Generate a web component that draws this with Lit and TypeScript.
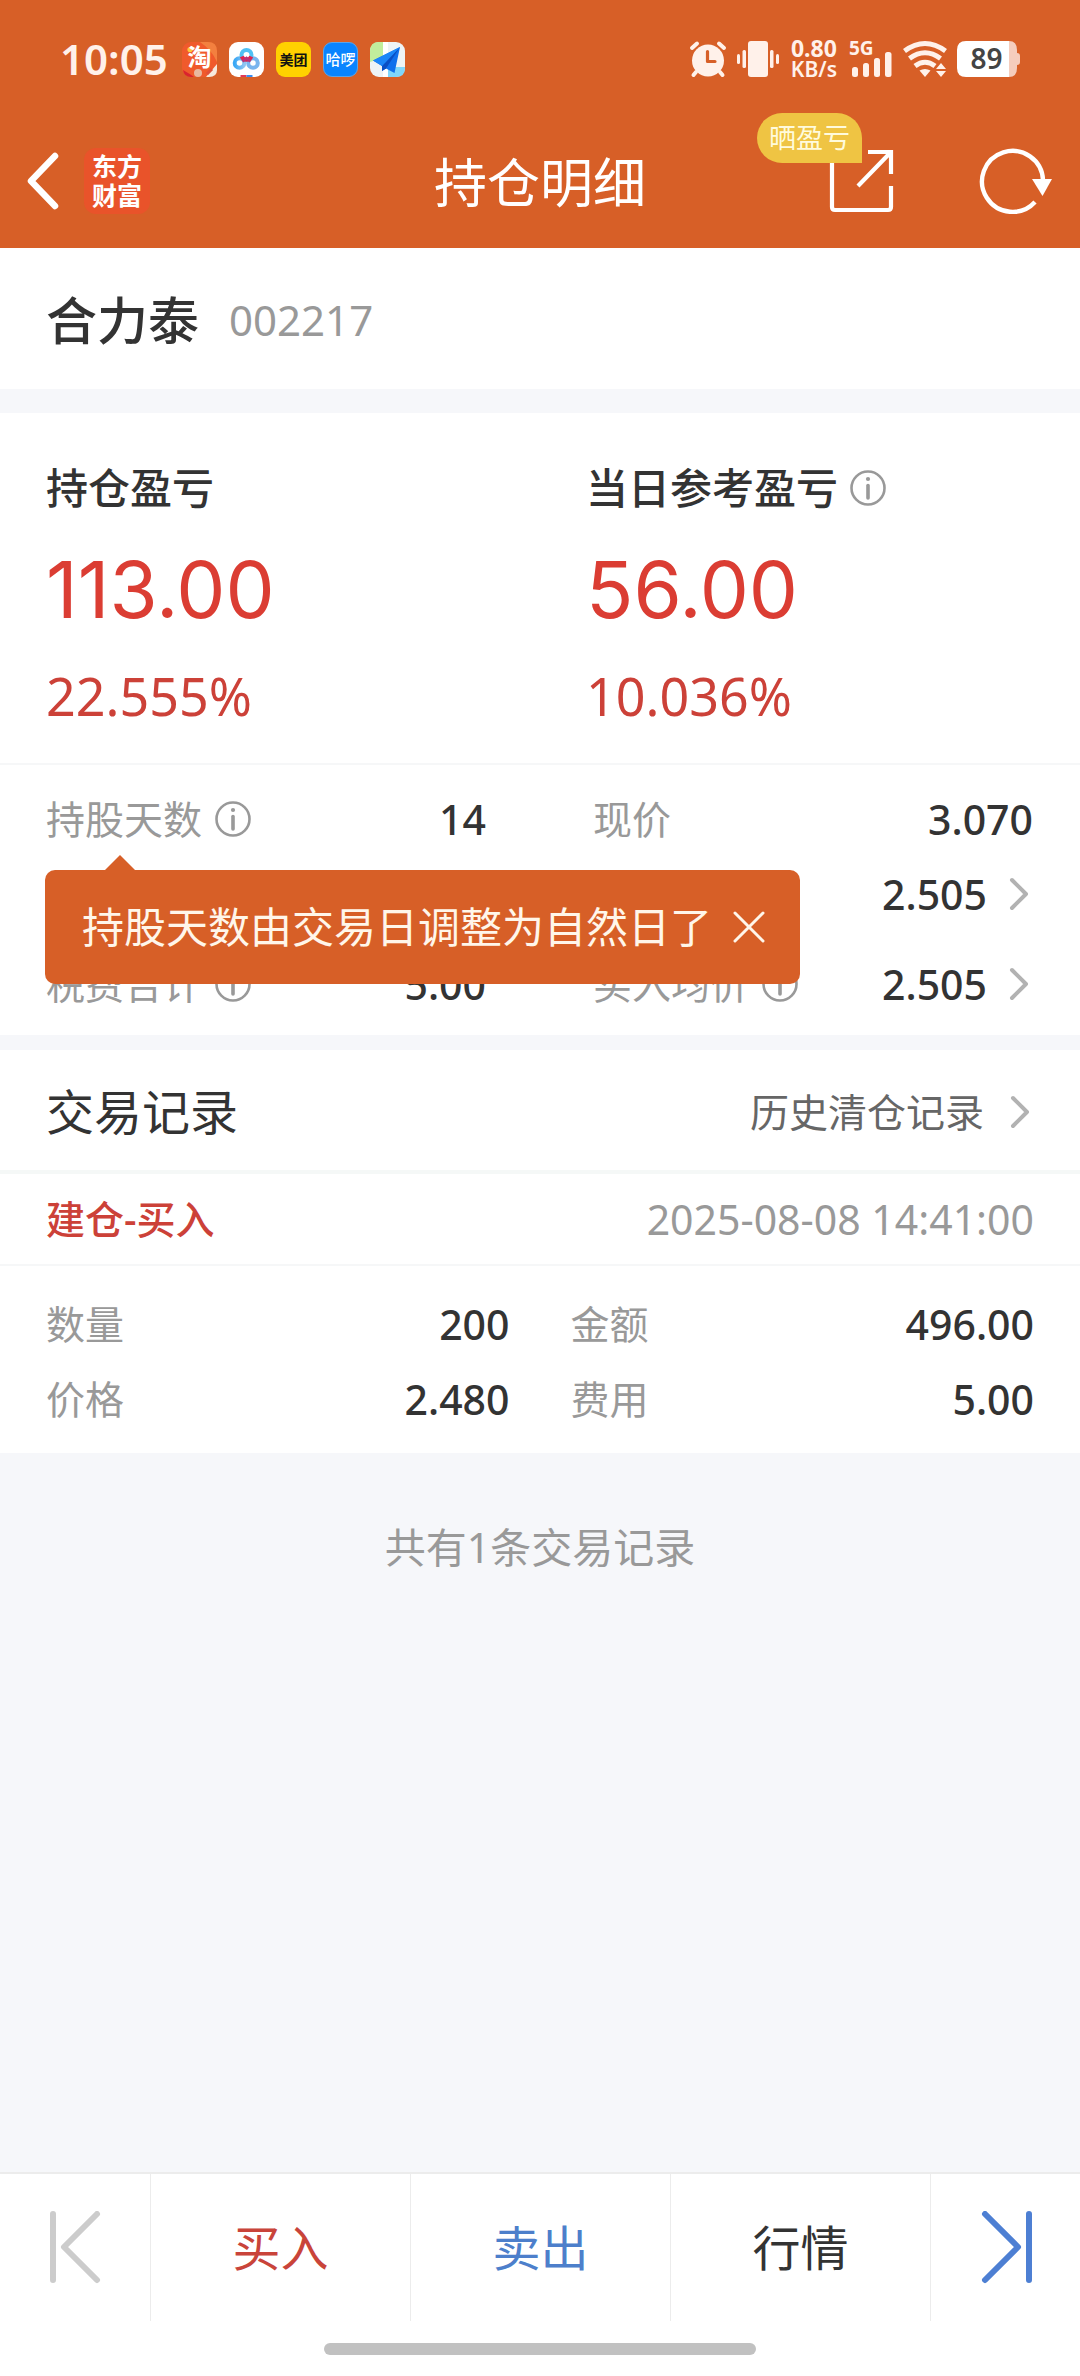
import { LitElement, html, css, nothing } from "lit";
import { customElement, state } from "lit/decorators.js";

interface Field {
  label: string;
  value: string;
  info?: boolean;
  link?: boolean;
}

const infoIcon = html`<svg class="info" viewBox="0 0 36 36" aria-hidden="true">
  <circle cx="18" cy="18" r="16.5" fill="none" stroke="#999" stroke-width="2.6" />
  <circle cx="18" cy="9" r="2.1" fill="#999" />
  <path d="M18 15.5V28" stroke="#999" stroke-width="3.6" stroke-linecap="round" />
</svg>`;

const chevron = html`<svg class="chevron" viewBox="0 0 20 34" aria-hidden="true">
  <path d="M3 3L17 17L3 31" fill="none" stroke="#b2b2b2" stroke-width="4" stroke-linecap="round" stroke-linejoin="round" />
</svg>`;

@customElement("status-bar")
export class StatusBar extends LitElement {
  static styles = css`
    :host {
      display: flex;
      align-items: center;
      justify-content: space-between;
      height: 118px;
      padding: 0 60px;
      color: #fff1ea;
      font-family: "Noto Sans", "Noto Sans CJK SC", sans-serif;
    }
    .group {
      display: flex;
      align-items: center;
    }
    .time {
      font-size: 42px;
      line-height: 60px;
      font-weight: 600;
      margin-right: 14px;
    }
    .apps {
      display: flex;
      gap: 12px;
    }
    .app {
      display: block;
      width: 35px;
      height: 35px;
      overflow: visible;
    }
    .tray {
      gap: 10px;
    }
    .tray svg {
      display: block;
      height: 36px;
      overflow: visible;
    }
    .alarm { width: 38px; }
    .vibrate { width: 42px; }
    .signal { width: 44px; }
    .wifi { width: 44px; }
    .battery { width: 63px; }
    .speed {
      font-size: 23px;
      line-height: 21px;
      font-weight: 700;
      text-align: center;
      padding: 0 2px;
    }
    .unit { font-size: 21px; font-weight: 600; }
  `;

  render() {
    return html`
      <div class="group">
        <span class="time">10:05</span>
        <div class="apps">
          <svg class="app" viewBox="0 0 35 35">
            <rect width="35" height="35" rx="9" fill="#f05a2c" />
            <path d="M18 0H26Q35 0 35 9V20Q30 8 18 0Z" fill="#f3803f" />
            <path d="M24 35L35 22V28Q35 35 27 35Z" fill="#f6e9dc" />
            <path d="M1 28Q8 32 12 35H9Q2 35 1 28Z" fill="#d9232e" />
            <circle cx="16" cy="31" r="4" fill="#e8b9a0" />
            <path d="M25 32L30 27" stroke="#e0503a" stroke-width="3" />
            <circle cx="8" cy="7.5" r="2.6" fill="#ffc83a" />
            <text x="17.500" y="24" text-anchor="middle" font-size="24" font-weight="700" fill="#fff">淘</text>
          </svg>
          <svg class="app" viewBox="0 0 35 35">
            <defs>
              <linearGradient id="cloud" x1="0" x2="1">
                <stop offset="0" stop-color="#3aa8f5" />
                <stop offset="1" stop-color="#8fc4f2" />
              </linearGradient>
            </defs>
            <rect width="35" height="35" rx="9" fill="#fff" />
            <g fill="none" stroke-width="4">
              <circle cx="10.5" cy="21" r="4.8" stroke="url(#cloud)" />
              <circle cx="24" cy="21" r="4.8" stroke="#78b4ee" />
              <circle cx="17.5" cy="13" r="5" stroke="#4fc0f4" />
              <path d="M12.8 14.5A5 5 0 0 0 22.2 14.5" stroke="#e0234f" />
              <path d="M13.5 19.5L17.5 16L21.5 19.5" stroke="#b8347a" stroke-width="2.5" />
            </g>
            <path d="M11.5 33H17.5V35H11.5Z" fill="#e23a55" />
            <path d="M17.5 33H23.5V35H17.5Z" fill="#3a8df0" />
          </svg>
          <svg class="app" viewBox="0 0 35 35">
            <rect width="35" height="35" rx="9" fill="#ffd100" />
            <text x="17.5" y="23" text-anchor="middle" font-size="14" font-weight="700" fill="#111">美团</text>
          </svg>
          <svg class="app" viewBox="0 0 35 35">
            <rect x="0.5" y="0.5" width="34" height="34" rx="8.5" fill="#0a84ff" stroke="#5aa4ea" />
            <text x="17.5" y="23" text-anchor="middle" font-size="15" font-weight="500" fill="#fff">哈啰</text>
          </svg>
          <svg class="app" viewBox="0 0 35 35">
            <rect width="35" height="35" rx="9" fill="#eef3f5" />
            <path d="M9 0H13V16L0 20V9Q0 0 9 0Z" fill="#c1ee9c" />
            <path d="M18 25H35V26Q35 35 26 35H18Z" fill="#7fd6fb" />
            <path d="M13 0H18V35H13Z" fill="#fff" />
            <path d="M30 5L3 18.5L12 24V29L16 26.5L24.5 31Z" fill="#0f6fec" />
            <path d="M30 5L12 24V29L16 26.5Z" fill="#0a4fc4" />
            <path d="M30 5L3 18.5L12 24Z" fill="#1b86f8" />
          </svg>
        </div>
      </div>
      <div class="group tray">
        <svg class="alarm" viewBox="0 0 38 36" fill="#fff1ea">
          <circle cx="19" cy="19.500" r="16" />
          <path d="M3 7L8 2.500M35 7L30 2.500M7 31L4.500 34M31 31L33.500 34" stroke="#fff1ea" stroke-width="4" stroke-linecap="round" />
          <path d="M18.500 10.500V20.500H26" fill="none" stroke="#d75f27" stroke-width="3.200" stroke-linecap="round" stroke-linejoin="round" />
        </svg>
        <svg class="vibrate" viewBox="0 0 42 36" fill="#fff1ea">
          <rect x="11" y="0" width="20" height="36" rx="3" />
          <rect x="5.500" y="9" width="3.500" height="18" rx="1.500" />
          <rect x="33" y="9" width="3.500" height="18" rx="1.500" />
          <rect x="0" y="13" width="3" height="10" rx="1.500" />
          <rect x="39" y="13" width="3" height="10" rx="1.500" />
        </svg>
        <div class="speed"><div>0.80</div><div class="unit">KB/s</div></div>
        <svg class="signal" viewBox="0 0 44 36" fill="#fff1ea">
          <text x="0" y="14" font-size="19" font-weight="700">5G</text>
          <rect x="3" y="26" width="6" height="10" rx="2.500" />
          <rect x="14" y="22" width="6" height="14" rx="2.500" />
          <rect x="25" y="17" width="6" height="19" rx="2.500" />
          <rect x="36" y="11" width="6.500" height="25" rx="2.500" />
        </svg>
        <svg class="wifi" viewBox="0 0 44 36">
          <g fill="none" stroke="#fff1ea" stroke-width="5">
            <path d="M1.500 10Q22 -5 42.500 10" />
            <path d="M6.500 17.500Q22 6 37.500 17.500" />
            <path d="M12 25Q22 17.500 32 25" />
          </g>
          <path d="M16.500 29.500Q22 26.500 27.500 29.500L22 36Z" fill="#fff1ea" />
          <path d="M38 22L43 28H33ZM38 36L43 30H33Z" fill="#fff1ea" />
        </svg>
        <svg class="battery" viewBox="0 0 63 36">
          <path d="M50 0H52Q60 0 60 9V12Q63 12 63 15V21Q63 24 60 24V27Q60 36 52 36H50Z" fill="#f5cdbd" />
          <path d="M9 0H52V36H9Q0 36 0 27V9Q0 0 9 0Z" fill="#fff" />
          <text x="29.500" y="28" text-anchor="middle" font-size="28" font-weight="600" fill="#444">89</text>
        </svg>
      </div>
    `;
  }
}

@customElement("nav-header")
export class NavHeader extends LitElement {
  static styles = css`
    :host {
      display: grid;
      grid-template-columns: 1fr auto 1fr;
      align-items: center;
      height: 130px;
      box-sizing: border-box;
      padding: 0 27px 4px;
      color: #fff;
      font-family: "Noto Sans", "Noto Sans CJK SC", sans-serif;
    }
    button {
      display: block;
      border: 0;
      padding: 0;
      background: none;
      font: inherit;
      color: inherit;
    }
    svg { display: block; }
    .left {
      display: flex;
      align-items: center;
      gap: 24px;
    }
    .back svg { width: 33px; height: 58px; }
    .brand {
      display: grid;
      place-content: center;
      width: 66px;
      height: 66px;
      border-radius: 12px;
      background: #e9532a;
      font-size: 25px;
      line-height: 29px;
      font-weight: 700;
      text-align: center;
    }
    h1 {
      margin: 0;
      padding-top: 4px;
      font-size: 53px;
      line-height: 72px;
      font-weight: 400;
    }
    .right {
      display: flex;
      align-items: center;
      justify-content: flex-end;
      gap: 85px;
    }
    .share { position: relative; }
    .share svg { width: 66px; height: 66px; }
    .refresh svg { width: 74px; height: 66px; }
    .badge {
      position: absolute;
      right: 32px;
      bottom: 51px;
      padding: 0 12px;
      border-radius: 25px 25px 0 25px;
      background: #efc443;
      color: #fffbdc;
      font-size: 27px;
      line-height: 50px;
      white-space: nowrap;
    }
  `;

  render() {
    return html`
      <div class="left">
        <button class="back" aria-label="返回">
          <svg viewBox="0 0 33 58">
            <path d="M28 4L4 29L28 54" fill="none" stroke="#fff" stroke-width="6.500" stroke-linecap="round" stroke-linejoin="round" />
          </svg>
        </button>
        <div class="brand"><span>东方</span><span>财富</span></div>
      </div>
      <h1>持仓明细</h1>
      <div class="right">
        <button class="share">
          <svg viewBox="0 0 66 66" fill="none" stroke="#fff" stroke-width="4.200">
            <path d="M4 8V59Q4 62 7 62H60Q63 62 63 59V38" />
            <path d="M40 4H63V26M62 5L30 38" />
          </svg>
          <span class="badge">晒盈亏</span>
        </button>
        <button class="refresh" aria-label="刷新">
          <svg viewBox="0 0 74 66">
            <path d="M56 54A30.500 30.500 0 1 1 64 32" fill="none" stroke="#fff" stroke-width="4.400" />
            <path d="M53 31H73L63.500 48Z" fill="#fff" />
          </svg>
        </button>
      </div>
    `;
  }
}

@customElement("app-root")
export class AppRoot extends LitElement {
  @state() private tipOpen = true;

  static styles = css`
    :host {
      display: flex;
      flex-direction: column;
      min-height: 100vh;
      background: #f6f7fa;
      color: #333;
      font-family: "Noto Sans", "Noto Sans CJK SC", sans-serif;
    }
    h2, p, dl, dd, dt { margin: 0; font-weight: 400; }
    button {
      border: 0;
      padding: 0;
      background: none;
      font: inherit;
      color: inherit;
    }
    svg { display: block; }
    .info { width: 36px; height: 36px; flex: none; }
    .chevron { width: 20px; height: 34px; flex: none; }
    .top { background: #d75f27; }
    main { flex: 1; }
    .panel { background: #fff; }
    .stock {
      display: flex;
      align-items: center;
      gap: 30px;
      height: 141px;
      box-sizing: border-box;
      padding: 3px 46px 0;
      margin-bottom: 24px;
    }
    .name { font-size: 51px; line-height: 60px; font-weight: 500; }
    .code { font-size: 42px; line-height: 60px; color: #999; }
    .profit {
      display: grid;
      grid-template-columns: 1fr 1fr;
      height: 352px;
      box-sizing: border-box;
      padding-top: 45px;
      border-bottom: 2px solid #f6f7f8;
    }
    .cell { padding-left: 46px; }
    .cell-title {
      display: flex;
      align-items: center;
      gap: 12px;
      font-size: 42px;
      line-height: 60px;
      font-weight: 500;
    }
    .amount {
      font-family: Inter, "Noto Sans", sans-serif;
      font-size: 78px;
      line-height: 144px;
      color: #db3d33;
    }
    .percent { font-size: 52px; line-height: 68px; color: #cc4138; }
    .details {
      position: relative;
      display: grid;
      grid-template-columns: 1fr 1fr;
      column-gap: 107px;
      row-gap: 15px;
      padding: 16px 47px 14px 46px;
      margin-bottom: 15px;
    }
    .field {
      display: flex;
      align-items: center;
      height: 75px;
      font-size: 39px;
      line-height: 60px;
    }
    .field dt {
      display: flex;
      align-items: center;
      gap: 13px;
      color: #999;
    }
    .field dd, .field dd button {
      display: flex;
      align-items: center;
      gap: 22px;
      font-size: 41px;
      font-weight: 500;
    }
    .field dd { margin-left: auto; }
    .field .chevron { margin-right: 4px; }
    .stack { display: flex; flex-direction: column; }
    .tip {
      position: absolute;
      left: 45px;
      top: 105px;
      display: flex;
      align-items: center;
      gap: 20px;
      height: 114px;
      padding: 0 34px 0 37px;
      border-radius: 10px;
      background: #d75f27;
      color: #fff6ea;
      font-size: 42px;
      line-height: 60px;
      white-space: nowrap;
    }
    .tip::before {
      content: "";
      position: absolute;
      left: 60px;
      bottom: 100%;
      border: 15px solid transparent;
      border-top-width: 0;
      border-bottom-color: #d75f27;
    }
    .tip svg { width: 34px; height: 34px; }
    .records-head {
      display: flex;
      align-items: center;
      justify-content: space-between;
      height: 120px;
      box-sizing: content-box;
      padding: 0 50px 0 46px;
      border-bottom: 4px solid #f5f8f7;
    }
    .records-head h2 { padding-top: 3px; font-size: 48px; line-height: 60px; }
    .history {
      display: flex;
      align-items: center;
      gap: 26px;
      padding-top: 4px;
      font-size: 39px;
      line-height: 60px;
      color: #666;
      text-decoration: none;
    }
    .record-title {
      display: flex;
      align-items: center;
      justify-content: space-between;
      height: 90px;
      padding: 0 46px;
      border-bottom: 2px solid #f6f7f8;
    }
    .kind { font-size: 39px; line-height: 60px; font-weight: 500; color: #cc4138; }
    .when { font-size: 41px; line-height: 60px; color: #999; }
    .record-body {
      display: grid;
      grid-template-columns: 1fr 1fr;
      column-gap: 61px;
      padding: 20px 46px 17px;
    }
    .total {
      padding-top: 64px;
      font-size: 41px;
      line-height: 60px;
      text-align: center;
      color: #999;
    }
    .actions {
      display: grid;
      grid-template-columns: 150px 1fr 1fr 1fr 150px;
      border-top: 2px solid #ececec;
      background: #fff;
    }
    .actions button {
      display: grid;
      place-items: center;
      height: 147px;
      font-size: 48px;
      line-height: 60px;
    }
    .actions button + button { border-left: 1px solid #ececec; }
    .actions svg { width: 52px; height: 74px; }
    .buy { color: #c9443a; }
    .sell { color: #4d7fcb; }
    .home {
      display: flex;
      justify-content: center;
      padding: 22px 0 21px;
      background: #fff;
    }
    .home span {
      width: 40%;
      height: 12px;
      border-radius: 6px;
      background: #c1c1c1;
    }
  `;

  private field(f: Field) {
    return html`<div class="field">
      <dt>${f.label}${f.info ? infoIcon : nothing}</dt>
      <dd>${f.link ? html`<button>${f.value}${chevron}</button>` : f.value}</dd>
    </div>`;
  }

  render() {
    const record: Field[] = [
      { label: "数量", value: "200" },
      { label: "金额", value: "496.00" },
      { label: "价格", value: "2.480" },
      { label: "费用", value: "5.00" },
    ];
    return html`
      <header class="top">
        <status-bar></status-bar>
        <nav-header></nav-header>
      </header>
      <main>
        <section class="panel stock">
          <span class="name">合力泰</span>
          <span class="code">002217</span>
        </section>

        <section class="panel profit">
          <div class="cell">
            <div class="cell-title">持仓盈亏</div>
            <p class="amount">113.00</p>
            <p class="percent">22.555%</p>
          </div>
          <div class="cell">
            <div class="cell-title">当日参考盈亏${infoIcon}</div>
            <p class="amount">56.00</p>
            <p class="percent">10.036%</p>
          </div>
        </section>

        <dl class="panel details">
          ${this.field({ label: "持股天数", value: "14", info: true })}
          <div class="stack">
            ${this.field({ label: "现价", value: "3.070" })}
            ${this.field({ label: "", value: "2.505", link: true })}
          </div>
          ${this.field({ label: "税费合计", value: "5.00", info: true })}
          ${this.field({ label: "买入均价", value: "2.505", info: true, link: true })}
          ${this.tipOpen
            ? html`<div class="tip" role="status">
                <span>持股天数由交易日调整为自然日了</span>
                <button aria-label="关闭" @click=${() => (this.tipOpen = false)}>
                  <svg viewBox="0 0 34 34">
                    <path d="M3 3L31 31M31 3L3 31" stroke="#fff6ea" stroke-width="3" stroke-linecap="round" />
                  </svg>
                </button>
              </div>`
            : nothing}
        </dl>

        <section class="panel">
          <div class="records-head">
            <h2>交易记录</h2>
            <a class="history" href="#history">历史清仓记录${chevron}</a>
          </div>
          <div class="record-title">
            <span class="kind">建仓-买入</span>
            <time class="when">2025-08-08 14:41:00</time>
          </div>
          <dl class="record-body">${record.map((f) => this.field(f))}</dl>
        </section>
        <p class="total">共有1条交易记录</p>
      </main>
      <footer>
        <nav class="actions">
          <button aria-label="上一只" disabled>
            <svg viewBox="0 0 52 74" fill="none" stroke="#ccc" stroke-width="6" stroke-linecap="round" stroke-linejoin="round">
              <path d="M4 3V69M48 3L15 36L48 69" />
            </svg>
          </button>
          <button class="buy">买入</button>
          <button class="sell">卖出</button>
          <button>行情</button>
          <button aria-label="下一只">
            <svg viewBox="0 0 52 74" fill="none" stroke="#4d7fd3" stroke-width="6" stroke-linecap="round" stroke-linejoin="round">
              <path d="M49 3V69M5 3L38 36L5 69" />
            </svg>
          </button>
        </nav>
        <div class="home"><span></span></div>
      </footer>
    `;
  }
}
